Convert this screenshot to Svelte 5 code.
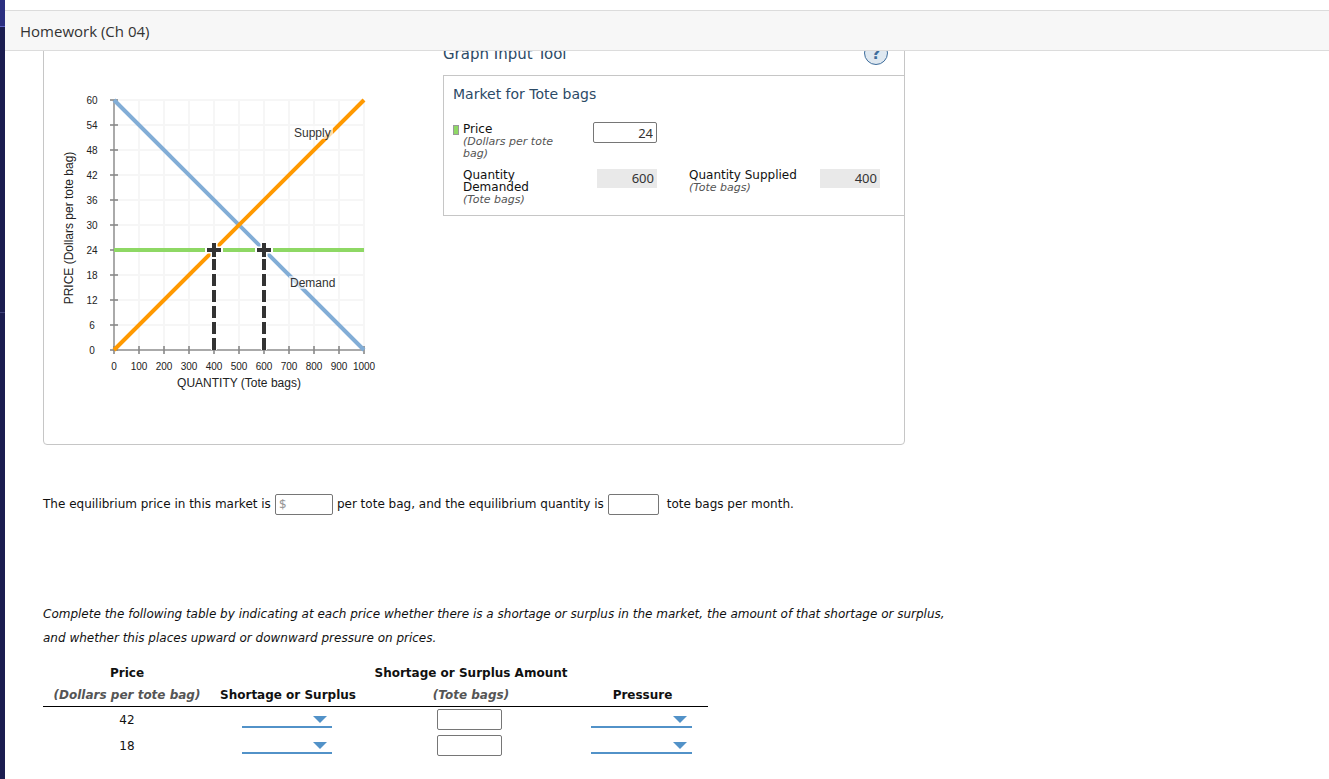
<script>
  const prices = [0, 6, 12, 18, 24, 30, 36, 42, 48, 54, 60];
  const quantities = [0, 100, 200, 300, 400, 500, 600, 700, 800, 900, 1000];
  const px = (q) => 64 + q / 4;
  const py = (p) => 265 - (p * 25) / 6;

  let price = $state(24);
  let demanded = $derived(Math.round(((60 - price) * 1000) / 60));
  let supplied = $derived(Math.round((price * 1000) / 60));

  const rows = [42, 18];
</script>

<div class="app">
  <div class="rail"><span class="rail-top"></span><span class="rail-mid"></span></div>
  <div class="main">
    <header><h1>Homework (Ch 04)</h1></header>
    <main>
      <section class="panel">
        <svg class="chart" width="340" height="310" role="img" aria-label="Supply and demand">
          {#each quantities as q}
            <line class="grid" x1={px(q)} x2={px(q)} y1={py(60)} y2={py(0)} />
          {/each}
          {#each prices as p}
            <line class="grid" x1={px(0)} x2={px(1000)} y1={py(p)} y2={py(p)} />
          {/each}
          <path class="axis" d="M64 15V265H314" />
          {#each prices as p}
            <line class="tick" x1="60" x2="68" y1={py(p)} y2={py(p)} />
            <text class="num" x="42" y={py(p) + 4}>{p}</text>
          {/each}
          {#each quantities as q}
            <line class="tick" x1={px(q)} x2={px(q)} y1="261" y2="269" />
            <text class="num" x={px(q)} y="285">{q}</text>
          {/each}
          <line class="curve demand" x1={px(0)} y1={py(60)} x2={px(1000)} y2={py(0)} />
          <line class="curve supply" x1={px(0)} y1={py(0)} x2={px(1000)} y2={py(60)} />
          <line class="curve price" x1={px(0)} x2={px(1000)} y1={py(price)} y2={py(price)} />
          {#each [supplied, demanded] as q}
            <line class="drop-halo" x1={px(q)} x2={px(q)} y1={py(price)} y2={py(0)} />
            <line class="drop" x1={px(q)} x2={px(q)} y1={py(0)} y2={py(price)} />
            <path class="halo" d="M{px(q) - 9} {py(price)}h18M{px(q)} {py(price) - 9}v18" />
            <path class="cross" d="M{px(q) - 7} {py(price)}h14M{px(q)} {py(price) - 7}v14" />
          {/each}
          <rect class="label-bg" x="243" y="41" width="40" height="13" />
          <rect class="label-bg" x="239" y="191" width="47" height="13" />
          <text class="name" x="244" y="52">Supply</text>
          <text class="name" x="240" y="202">Demand</text>
          <text class="title" x="189" y="302">QUANTITY (Tote bags)</text>
          <text class="title" transform="translate(23 143) rotate(-90)">PRICE (Dollars per tote bag)</text>
        </svg>

        <div class="tool">
          <div class="tool-head">
            <h2>Graph Input Tool</h2>
            <button class="help" aria-label="Help">?</button>
          </div>
          <div class="box">
            <h3>Market for Tote bags</h3>
            <div class="fields">
              <span class="swatch"></span>
              <label for="price">Price<em>(Dollars per tote bag)</em></label>
              <input id="price" class="field" bind:value={price} />
              <label class="second-row" for="qd">Quantity Demanded<em>(Tote bags)</em></label>
              <output id="qd">{demanded}</output>
              <label class="supplied" for="qs">Quantity Supplied<em>(Tote bags)</em></label>
              <output id="qs">{supplied}</output>
            </div>
          </div>
        </div>
      </section>

      <p class="sentence">
        <label for="eqp">The equilibrium price in this market is</label>
        <input id="eqp" class="field eqp" placeholder="$" />
        <label for="eqq">per tote bag, and the equilibrium quantity is</label>
        <input id="eqq" class="field eqq" />
        <span class="tail">tote bags per month.</span>
      </p>

      <p class="instructions">
        Complete the following table by indicating at each price whether there is a shortage or surplus in the market, the amount of that shortage or surplus, and whether this places upward or downward pressure on prices.
      </p>

      <table>
        <colgroup><col class="c1" /><col class="c2" /><col class="c3" /><col class="c4" /></colgroup>
        <thead>
          <tr>
            <th>Price<em>(Dollars per tote bag)</em></th>
            <th>Shortage or Surplus</th>
            <th>Shortage or Surplus Amount<em>(Tote bags)</em></th>
            <th>Pressure</th>
          </tr>
        </thead>
        <tbody>
          {#each rows as r}
            <tr>
              <td>{r}</td>
              <td class="control">
                <span class="drop-down kind">
                  <select aria-label="Shortage or surplus at {r}">
                    <option></option><option>Shortage</option><option>Surplus</option>
                  </select>
                </span>
              </td>
              <td class="control"><input class="field amount" aria-label="Amount at {r}" /></td>
              <td class="control">
                <span class="drop-down pressure">
                  <select aria-label="Pressure at {r}">
                    <option></option><option>Upward</option><option>Downward</option>
                  </select>
                </span>
              </td>
            </tr>
          {/each}
        </tbody>
      </table>
    </main>
  </div>
</div>

<style>
  :global(body) {
    background: #fff;
  }
  .app {
    display: flex;
    height: 100vh;
    overflow: hidden;
    font: 12px/24px Verdana, "DejaVu Sans", sans-serif;
    color: #111;
  }
  .rail {
    flex: 0 0 5px;
    display: flex;
    flex-direction: column;
    background: #1b1d50;
  }
  .rail-top {
    height: 26px;
    background: #2b2f80;
    border-bottom: 1px solid #5c62c4;
  }
  .rail-mid {
    height: 285px;
    border-bottom: 1px solid #3f427a;
  }
  .main {
    flex: 1;
    min-width: 0;
    display: flex;
    flex-direction: column;
    padding-top: 10px;
  }
  header {
    flex: none;
    padding: 0 15px;
    background: #f7f7f7;
    border: solid #dcdcdc;
    border-width: 1px 0;
  }
  h1 {
    margin: 0;
    padding-top: 1px;
    font: 400 15px/38px "Open Sans", sans-serif;
    color: #333;
  }
  main {
    flex: 1;
    min-height: 0;
    overflow: hidden;
    padding: 0 38px;
  }
  .panel {
    box-sizing: border-box;
    display: flex;
    max-width: 862px;
    margin-top: -31px;
    border: 1px solid #c6c6c6;
    border-radius: 4px;
  }
  .chart {
    flex: none;
    margin: 64px 53px 49px 6px;
    font-family: Arial, "Liberation Sans", sans-serif;
  }
  .grid {
    stroke: #f6f6f6;
    stroke-width: 2px;
  }
  .axis {
    fill: none;
    stroke: #aaa;
    stroke-width: 2px;
  }
  .tick {
    stroke: #888;
    stroke-width: 2px;
    stroke-opacity: 0.8;
  }
  .num {
    font-size: 10px;
    text-anchor: middle;
    fill: #222;
  }
  .name {
    font-size: 12px;
    fill: #333;
  }
  .title {
    font-size: 12px;
    text-anchor: middle;
    fill: #222;
  }
  .curve {
    stroke-width: 4px;
  }
  .demand {
    stroke: #82add6;
  }
  .supply {
    stroke: #ff9900;
  }
  .price {
    stroke: #8ed864;
  }
  .drop-halo {
    stroke: #fff;
    stroke-width: 6px;
  }
  .drop {
    stroke: #333;
    stroke-width: 4px;
    stroke-dasharray: 12px 4px;
  }
  .halo {
    fill: none;
    stroke: #fff;
    stroke-width: 7px;
  }
  .cross {
    fill: none;
    stroke: #333;
    stroke-width: 4px;
  }
  .label-bg {
    fill: #fff;
    fill-opacity: 0.65;
  }
  .tool {
    flex: 1;
    min-width: 0;
    padding-top: 20px;
  }
  .tool-head {
    display: flex;
    justify-content: space-between;
    align-items: center;
    height: 24px;
    padding-right: 16px;
  }
  h2,
  h3 {
    margin: 0;
    font-size: 14px;
    font-weight: 400;
    color: #2c4a66;
  }
  h2 {
    padding-top: 1px;
    font-size: 15px;
  }
  .help {
    width: 24px;
    height: 24px;
    padding: 2px 0 0;
    border: 1px solid #3e6d9c;
    border-radius: 50%;
    background: #dfe8f0;
    font: 700 15px/20px Verdana, "DejaVu Sans", sans-serif;
    color: #3e6d9c;
  }
  .box {
    margin-top: 10px;
    padding: 6px 9px 9px;
    border: solid #c6c6c6;
    border-width: 1px 0 1px 1px;
  }
  .fields {
    display: grid;
    grid-template-columns: 10px 100px 94px 32px 131px 60px;
    align-items: start;
    margin-top: 16px;
    row-gap: 8px;
    line-height: 12px;
  }
  .fields label {
    padding-top: 1px;
  }
  .fields em {
    display: block;
    padding-top: 1px;
    font-size: 11px;
    color: #555;
  }
  .swatch {
    box-sizing: border-box;
    width: 6px;
    height: 10px;
    margin-top: 3px;
    border: 1px solid #999;
    background: #8ed864;
  }
  .fields .field {
    justify-self: end;
    width: 64px;
    text-align: right;
  }
  .second-row {
    grid-column: 2;
  }
  .supplied {
    grid-column: 5;
  }
  output {
    justify-self: end;
    box-sizing: border-box;
    width: 60px;
    margin-top: 1px;
    padding-right: 3px;
    background: #e9e9e9;
    font: 13px/19px "Noto Sans", sans-serif;
    text-align: right;
    color: #333;
  }
  .field {
    box-sizing: border-box;
    height: 21px;
    padding: 0 3px;
    border: 1px solid #767676;
    border-radius: 2px;
    background: #fff;
    font: 13px "Noto Sans", sans-serif;
    color: #333;
  }
  .field::placeholder {
    color: #999;
  }
  .sentence {
    display: flex;
    align-items: center;
    gap: 4px;
    margin: 47px 0 0;
  }
  .eqp {
    width: 58px;
  }
  .eqq {
    width: 51px;
  }
  .tail {
    margin-left: 4px;
  }
  .instructions {
    max-width: 920px;
    margin: 86px 0 0;
    font-style: italic;
  }
  table {
    width: 665px;
    margin-top: 12px;
    border-collapse: collapse;
    table-layout: fixed;
    text-align: center;
  }
  .c1 {
    width: 168px;
  }
  .c2 {
    width: 154px;
  }
  .c3 {
    width: 212px;
  }
  .c4 {
    width: 131px;
  }
  th {
    padding: 0;
    vertical-align: bottom;
    line-height: 22px;
    white-space: nowrap;
    border-bottom: 1px solid #000;
  }
  th em {
    display: block;
    color: #555;
  }
  td {
    height: 26px;
    padding: 0;
  }
  .control {
    height: 24px;
    padding: 0 3px 2px 0;
  }
  .amount {
    display: block;
    width: 65px;
    margin: 0 auto;
  }
  .drop-down {
    position: relative;
    display: block;
    margin: 0 auto;
  }
  .kind {
    width: 90px;
  }
  .pressure {
    width: 101px;
  }
  .drop-down::after {
    content: "";
    position: absolute;
    right: 5px;
    top: 6px;
    border: 7px solid transparent;
    border-top-color: #5292c8;
    border-bottom: 0;
    pointer-events: none;
  }
  select {
    appearance: none;
    display: block;
    width: 100%;
    height: 18px;
    padding: 0 20px 0 2px;
    border: 0;
    border-bottom: 2px solid #5292c8;
    border-radius: 0;
    background: #fff;
    font: 12px Verdana, "DejaVu Sans", sans-serif;
  }
</style>
